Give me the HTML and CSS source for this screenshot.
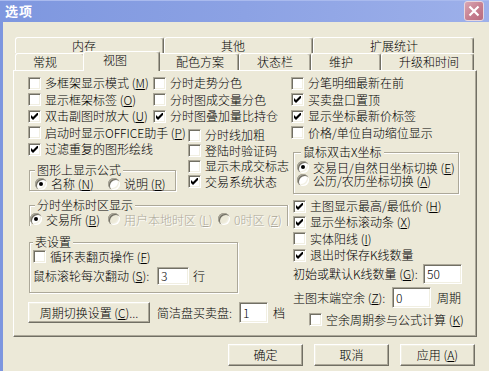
FILE: index.html
```html
<!DOCTYPE html>
<html lang="zh-CN">
<head>
<meta charset="utf-8">
<title>选项</title>
<link rel="stylesheet" href="styles.css">
</head>
<body>
<div class="window">
  <div class="titlebar">
    <span class="title">选项</span>
    <span class="close"><svg width="18" height="18" viewBox="0 0 18 18"><path d="M4.5 4.5L13.5 13.5M13.5 4.5L4.5 13.5" stroke="#fff" stroke-width="2.2" fill="none"/></svg></span>
  </div>
  <div class="client">
    <div class="tabctl">
      <div class="tabrow r1">
        <div class="tab w149">内存</div>
        <div class="tab w149">其他</div>
        <div class="tab w161">扩展统计</div>
      </div>
      <div class="tabrow r2">
        <div class="tab w70">常规</div>
        <div class="tab w77 sel">视图</div>
        <div class="tab w81">配色方案</div>
        <div class="tab w72">状态栏</div>
        <div class="tab w70">维护</div>
        <div class="tab w93">升级和时间</div>
      </div>
      <div class="panel">
        <div class="top">
          <div class="lblock">
            <div class="cols">
              <div class="cA1">
                <div class="cb"><span class="box"></span><span>多框架显示模式 (<u>M</u>)</span></div>
                <div class="cb"><span class="box"></span><span>显示框架标签 (<u>O</u>)</span></div>
                <div class="cb"><span class="box"><svg class="chk" width="7" height="7" viewBox="0 0 7 7"><path d="M0 2L2 4L7 -1L7 2L2 7L0 5Z"/></svg></span><span>双击副图时放大 (<u>U</u>)</span></div>
              </div>
              <div class="cB">
                <div class="cb"><span class="box"></span><span>分时走势分色</span></div>
                <div class="cb"><span class="box"></span><span>分时图成交量分色</span></div>
                <div class="cb"><span class="box"><svg class="chk" width="7" height="7" viewBox="0 0 7 7"><path d="M0 2L2 4L7 -1L7 2L2 7L0 5Z"/></svg></span><span>分时图叠加量比持仓</span></div>
              </div>
            </div>
            <div class="cols">
              <div class="cA2">
                <div class="cb"><span class="box"></span><span>启动时显示OFFICE助手 (<u>P</u>)</span></div>
                <div class="cb"><span class="box"><svg class="chk" width="7" height="7" viewBox="0 0 7 7"><path d="M0 2L2 4L7 -1L7 2L2 7L0 5Z"/></svg></span><span>过滤重复的图形绘线</span></div>
                <fieldset class="grp g-formula">
                  <legend>图形上显示公式</legend>
                  <div class="frow">
                    <div class="rb f1"><span class="radio on"></span><span>名称 (<u>N</u>)</span></div>
                    <div class="rb"><span class="radio"></span><span>说明 (<u>R</u>)</span></div>
                  </div>
                </fieldset>
              </div>
              <div class="cC">
                <div class="cb"><span class="box"></span><span>分时线加粗</span></div>
                <div class="cb"><span class="box"></span><span>登陆时验证码</span></div>
                <div class="cb"><span class="box"></span><span>显示未成交标志</span></div>
                <div class="cb"><span class="box"><svg class="chk" width="7" height="7" viewBox="0 0 7 7"><path d="M0 2L2 4L7 -1L7 2L2 7L0 5Z"/></svg></span><span>交易系统状态</span></div>
              </div>
            </div>
          </div>
          <div class="rblock">
            <div class="cb"><span class="box"></span><span>分笔明细最新在前</span></div>
            <div class="cb"><span class="box"><svg class="chk" width="7" height="7" viewBox="0 0 7 7"><path d="M0 2L2 4L7 -1L7 2L2 7L0 5Z"/></svg></span><span>买卖盘口置顶</span></div>
            <div class="cb"><span class="box"><svg class="chk" width="7" height="7" viewBox="0 0 7 7"><path d="M0 2L2 4L7 -1L7 2L2 7L0 5Z"/></svg></span><span>显示坐标最新价标签</span></div>
            <div class="cb"><span class="box"></span><span>价格/单位自动缩位显示</span></div>
            <fieldset class="grp g-mouse">
              <legend>鼠标双击X坐标</legend>
              <div class="rb"><span class="radio on"></span><span>交易日/自然日坐标切换 (<u>E</u>)</span></div>
              <div class="rb"><span class="radio"></span><span>公历/农历坐标切换 (<u>A</u>)</span></div>
            </fieldset>
          </div>
        </div>
        <div class="bottom">
          <div class="lblock2">
            <fieldset class="grp g-tz">
              <legend>分时坐标时区显示</legend>
              <div class="tzrow">
                <div class="rb tz1"><span class="radio on"></span><span>交易所 (<u>B</u>)</span></div>
                <div class="rb tz2"><span class="radio off"></span><span class="dis">用户本地时区 (<u>L</u>)</span></div>
                <div class="rb"><span class="radio off"></span><span class="dis">0时区 (<u>Z</u>)</span></div>
              </div>
            </fieldset>
            <fieldset class="grp g-tbl">
              <legend>表设置</legend>
              <div class="cb"><span class="box"></span><span>循环表翻页操作 (<u>F</u>)</span></div>
              <div class="inrow srow"><span class="lbl-s">鼠标滚轮每次翻动 (<u>S</u>):</span><span class="edit e-s">3</span><span class="unit">行</span></div>
            </fieldset>
            <div class="btnrow">
              <div class="btn btn-wide">周期切换设置 (<u>C</u>)...</div>
              <span class="lbl-j">简洁盘买卖盘:</span><span class="edit e-j">1</span><span class="unit">档</span>
            </div>
          </div>
          <div class="rblock2">
            <div class="cb"><span class="box"><svg class="chk" width="7" height="7" viewBox="0 0 7 7"><path d="M0 2L2 4L7 -1L7 2L2 7L0 5Z"/></svg></span><span>主图显示最高/最低价 (<u>H</u>)</span></div>
            <div class="cb"><span class="box"><svg class="chk" width="7" height="7" viewBox="0 0 7 7"><path d="M0 2L2 4L7 -1L7 2L2 7L0 5Z"/></svg></span><span>显示坐标滚动条 (<u>X</u>)</span></div>
            <div class="cb"><span class="box"></span><span>实体阳线 (<u>I</u>)</span></div>
            <div class="cb"><span class="box"><svg class="chk" width="7" height="7" viewBox="0 0 7 7"><path d="M0 2L2 4L7 -1L7 2L2 7L0 5Z"/></svg></span><span>退出时保存K线数量</span></div>
            <div class="inrow krow"><span class="lbl-k">初始或默认K线数量 (<u>G</u>):</span><span class="edit e-k">50</span></div>
            <div class="inrow zrow"><span class="lbl-z">主图末端空余 (<u>Z</u>):</span><span class="edit e-z">0</span><span class="unit">周期</span></div>
            <div class="cb kcb"><span class="box"></span><span>空余周期参与公式计算 (<u>K</u>)</span></div>
          </div>
        </div>
      </div>
    </div>
    <div class="btns">
      <div class="btn">确定</div>
      <div class="btn">取消</div>
      <div class="btn">应用 (<u>A</u>)</div>
    </div>
  </div>
</div>
</body>
</html>
```

FILE: styles.css
```css
* { box-sizing: border-box; }
html, body { margin: 0; padding: 0; background: #ECE9D8; }
body {
  font-family: "Noto Sans CJK SC", "Noto Sans", sans-serif;
  font-size: 12px;
  font-weight: 300;
  line-height: 14px;
  color: #000;
}
u { text-decoration: underline; text-underline-offset: 1px; }

.window {
  width: 489px;
  height: 371px;
  display: flex;
  flex-direction: column;
  overflow: hidden;
  background: #ECE9D8;
}
.titlebar {
  flex: none;
  height: 22px;
  display: flex;
  align-items: center;
  justify-content: space-between;
  padding: 0 5px 0 5px;
  background: linear-gradient(to right, #7E97DF 0%, #8CA2E4 50%, #9DB0EA 100%);
  box-shadow: inset 0 1px 0 #A9BAEE;
}
.title {
  color: #fff;
  font-weight: bold;
  font-size: 13px;
  line-height: 16px;
  letter-spacing: 1px;
}
.close {
  width: 20px;
  height: 20px;
  border: 1px solid #E8D6DC;
  border-radius: 3px;
  background: linear-gradient(135deg, #D9A6B3 0%, #C67E8F 55%, #B86D7F 100%);
  display: flex;
  align-items: center;
  justify-content: center;
}
.close svg { display: block; }

.client {
  flex: 1;
  border-left: 3px solid #7D96DF;
  padding: 15px 0 0 10px;
}
.tabctl { width: 464px; }
.tabrow { display: flex; padding-left: 2px; }
.r1 { height: 16px; }
.r2 { height: 17px; }
.tab {
  flex: none;
  height: 100%;
  border-top: 1px solid #fff;
  border-left: 1px solid #fff;
  border-right: 1px solid #716F64;
  box-shadow: inset -1px 0 0 #ACA899;
  border-radius: 3px 3px 0 0;
  white-space: nowrap;
  background: #ECE9D8;
}
.r1 .tab { padding-left: 56px; line-height: 15px; }
.r2 .tab { padding-left: 17px; line-height: 16px; }
.r2 .tab.sel {
  height: 20px;
  margin: -2px -2px 0 -2px;
  padding-left: 19px;
  position: relative;
  z-index: 1;
}
.w70 { width: 70px; }
.w72 { width: 72px; }
.w77 { width: 77px; }
.w81 { width: 81px; }
.w93 { width: 93px; }
.w149 { width: 149px; }
.w161 { width: 161px; }

.panel {
  width: 464px;
  height: 267px;
  border: 1px solid;
  border-color: #fff #716F64 #716F64 #fff;
  box-shadow: inset -1px -1px 0 #ACA899;
  padding: 4px 0 0 14px;
}

.top { display: flex; }
.lblock { width: 263px; flex: none; }
.cols { display: flex; }
.cA1 { width: 125px; flex: none; }
.cA2 { width: 160px; flex: none; }
.cC { margin-top: 3px; }

.cb, .rb {
  display: flex;
  align-items: center;
  gap: 4px;
  white-space: nowrap;
}
.cb { height: 16.5px; }
.cC .cb { height: 15.5px; }
.rb { height: 13px; line-height: 13px; }

.box {
  flex: none;
  width: 13px;
  height: 13px;
  background: #fff;
  border: 1px solid;
  border-color: #ACA899 #fff #fff #ACA899;
  box-shadow: inset 1px 1px 0 #716F64, inset -1px -1px 0 #F1EFE2;
  display: flex;
  align-items: center;
  justify-content: center;
}
.chk { display: block; fill: #000; }

.radio {
  flex: none;
  width: 12px;
  height: 12px;
  border-radius: 50%;
  background: #fff;
  box-shadow: inset 1px 1px 0 #ACA899, inset 2px 2px 0 #716F64, inset -1px -1px 0 #fff, inset -2px -2px 0 #F1EFE2;
  display: flex;
  align-items: center;
  justify-content: center;
}
.radio.on::after {
  content: "";
  width: 4px;
  height: 4px;
  border-radius: 50%;
  background: #000;
}
.radio.off { background: #ECE9D8; }
.dis { color: #ACA899; text-shadow: 1px 1px 0 #fff; }

.grp {
  margin: 0;
  padding: 0;
  min-width: 0;
  border: 1px solid #ACA899;
  box-shadow: inset 1px 1px 0 #fff, 1px 1px 0 #fff;
}
.grp legend {
  padding: 0 2px;
  line-height: 14px;
  background: #ECE9D8;
}

.g-formula { margin: 5.5px 0 0 1px; width: 147px; padding: 0 0 0 5px; }
.frow, .tzrow { display: flex; }
.f1 { width: 73px; }

.rblock { flex: none; }
.g-mouse { margin: 4px 0 0 2px; width: 166px; padding: 1.5px 0 6.5px 3px; }
.g-mouse legend { margin-left: 4px; }

.bottom { display: flex; }
.lblock2 { width: 265px; flex: none; }
.g-tz {
  margin: 4px 0 0 1px;
  width: 259px;
  padding: 0.5px 0 0 0;
  border-bottom: none;
  box-shadow: inset 1px 1px 0 #fff, 1px 0 0 #fff;
}
.g-tz legend { margin-left: 5px; }
.tz1 { width: 78px; }
.tz2 { width: 110px; }

.g-tbl { margin: 9.5px 0 0 1px; width: 209px; padding: 0.5px 0 7px 3px; }
.g-tbl .cb { height: 13px; line-height: 13px; }

.inrow { display: flex; align-items: center; white-space: nowrap; }
.srow { margin-top: 4.5px; height: 18px; }
.lbl-s { width: 124px; flex: none; }

.edit {
  flex: none;
  background: #fff;
  border: 1px solid;
  border-color: #ACA899 #fff #fff #ACA899;
  box-shadow: inset 1px 1px 0 #716F64, inset -1px -1px 0 #F1EFE2;
  padding-left: 3px;
  display: flex;
  align-items: center;
}
.e-s { width: 32px; height: 18px; }
.unit { margin-left: 4px; }

.btnrow {
  margin-top: 9px;
  height: 21px;
  display: flex;
  align-items: center;
  white-space: nowrap;
}
.lbl-j { margin-left: 7px; width: 82px; flex: none; }
.e-j { width: 29px; height: 21px; }
.btnrow .unit { margin-left: 5px; }

.rblock2 { padding-top: 4px; }
.rblock2 > .cb { height: 16.33px; }
.krow { margin-top: 1px; height: 20px; }
.lbl-k { width: 130px; flex: none; }
.e-k { width: 39px; height: 20px; }
.zrow { margin-top: 3px; height: 21px; }
.lbl-z { width: 99px; flex: none; }
.e-z { width: 39px; height: 21px; }
.zrow .unit { margin-left: 6px; }
.rblock2 > .kcb { margin-top: 5px; margin-left: 16px; height: 13px; line-height: 13px; }

.btns {
  display: flex;
  justify-content: flex-end;
  gap: 11px;
  padding-right: 14px;
  margin-top: 7px;
}
.btn {
  flex: none;
  width: 75px;
  height: 22px;
  display: flex;
  align-items: center;
  justify-content: center;
  white-space: nowrap;
  border: 1px solid;
  border-color: #fff #716F64 #716F64 #fff;
  box-shadow: inset -1px -1px 0 #ACA899, inset 1px 1px 0 #F1EFE2;
}
.btn-wide { width: 122px; height: 21px; }
```
